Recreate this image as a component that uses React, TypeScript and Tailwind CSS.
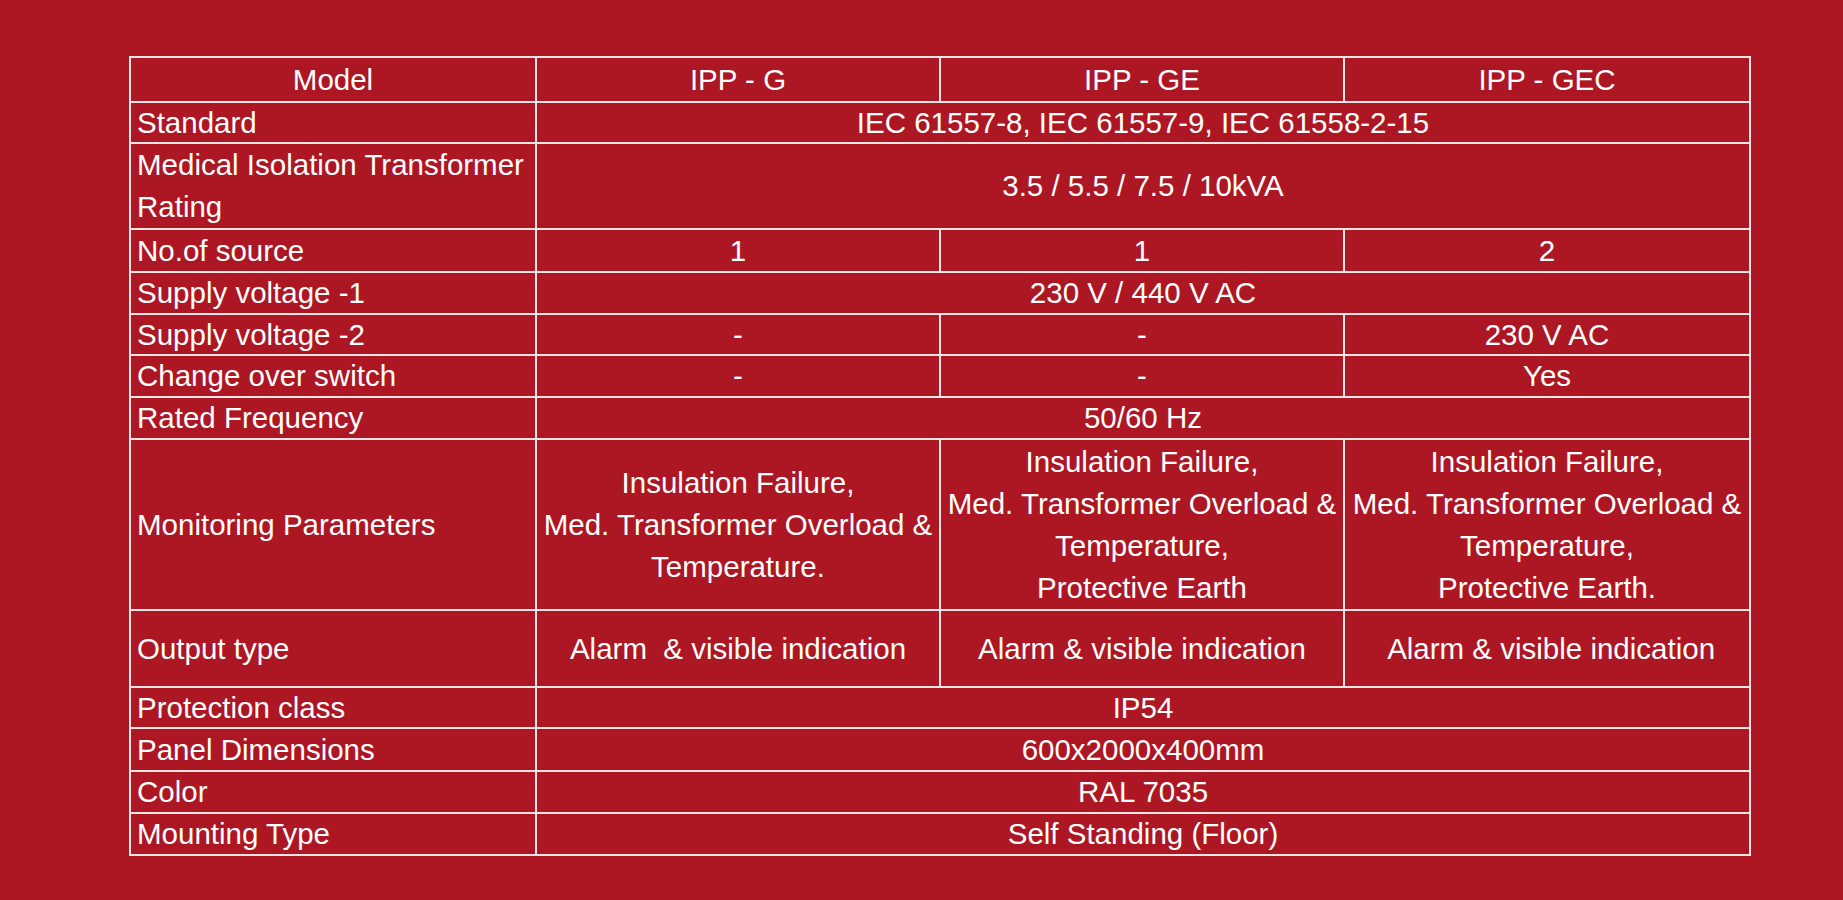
import React from "react";

type Row = {
  label: string;
  cells: string[][]; // each cell = lines; one cell = spans 3 columns
  h: string;
};

const rows: Row[] = [
  { label: "Standard", cells: [["IEC 61557-8, IEC 61557-9, IEC 61558-2-15"]], h: "h-[41px]" },
  { label: "Medical Isolation Transformer\nRating", cells: [["3.5 / 5.5 / 7.5 / 10kVA"]], h: "h-[86px]" },
  { label: "No.of source", cells: [["1"], ["1"], ["2"]], h: "h-[43px]" },
  { label: "Supply voltage -1", cells: [["230 V / 440 V AC"]], h: "h-[42px]" },
  { label: "Supply voltage -2", cells: [["-"], ["-"], ["230 V AC"]], h: "h-[41px]" },
  { label: "Change over switch", cells: [["-"], ["-"], ["Yes"]], h: "h-[42px]" },
  { label: "Rated Frequency", cells: [["50/60 Hz"]], h: "h-[42px]" },
  {
    label: "Monitoring Parameters",
    cells: [
      ["Insulation Failure,", "Med. Transformer Overload &", "Temperature."],
      ["Insulation Failure,", "Med. Transformer Overload &", "Temperature,", "Protective Earth"],
      ["Insulation Failure,", "Med. Transformer Overload &", "Temperature,", "Protective Earth."],
    ],
    h: "h-[171px]",
  },
  {
    label: "Output type",
    cells: [["Alarm\u00a0\u00a0& visible indication"], ["Alarm & visible indication"], ["\u00a0Alarm & visible indication"]],
    h: "h-[77px]",
  },
  { label: "Protection class", cells: [["IP54"]], h: "h-[41px]" },
  { label: "Panel Dimensions", cells: [["600x2000x400mm"]], h: "h-[43px]" },
  { label: "Color", cells: [["RAL 7035"]], h: "h-[42px]" },
  { label: "Mounting Type", cells: [["Self Standing (Floor)"]], h: "h-[42px]" },
];

const border = "border-2 border-[#f3e4e5] p-0 align-middle";
const cellCls = `${border} text-center`;

export default function App() {
  return (
    <div
      className="min-h-[900px] w-full bg-[#ad1623] pt-[56px] pl-[129px] text-white"
      style={{ fontFamily: '"Liberation Sans", Arial, sans-serif' }}
    >
      <table className="w-[1620px] table-fixed border-collapse text-[29.5px] leading-[34px]">
        <colgroup>
          <col className="w-[406px]" />
          <col className="w-[404px]" />
          <col className="w-[404px]" />
          <col className="w-[406px]" />
        </colgroup>
        <tbody>
          <tr className="h-[45px]">
            <td className={cellCls}>Model</td>
            <td className={cellCls}>IPP - G</td>
            <td className={cellCls}>IPP - GE</td>
            <td className={cellCls}>IPP - GEC</td>
          </tr>
          {rows.map((r) => (
            <tr key={r.label} className={r.h}>
              <td
                className={`${border} pl-[6px] whitespace-pre-line ${
                  r.label.includes("\n") ? "leading-[42px]" : ""
                }`}
              >
                {r.label}
              </td>
              {r.cells.length === 1 ? (
                <td colSpan={3} className={cellCls}>
                  {r.cells[0][0]}
                </td>
              ) : (
                r.cells.map((lines, i) => (
                  <td key={i} className={`${cellCls} whitespace-pre`}>
                    {lines.map((l, j) => (
                      <div key={j} className={lines.length > 1 ? "leading-[42px]" : ""}>
                        {l}
                      </div>
                    ))}
                  </td>
                ))
              )}
            </tr>
          ))}
        </tbody>
      </table>
    </div>
  );
}
